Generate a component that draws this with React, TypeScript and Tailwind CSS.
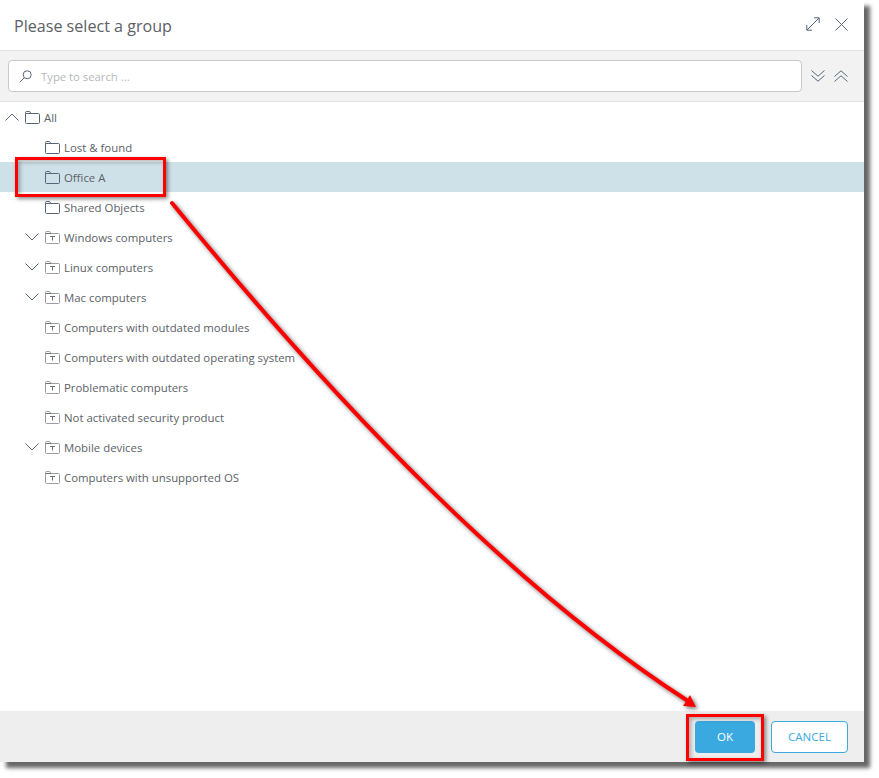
type Node = { label: string; kind: 'folder' | 'dynamic'; depth: number; arrow?: 'up' | 'down'; selected?: boolean };

const NODES: Node[] = [
  { label: 'All', kind: 'folder', depth: 0, arrow: 'up' },
  { label: 'Lost & found', kind: 'folder', depth: 1 },
  { label: 'Office A', kind: 'folder', depth: 1, selected: true },
  { label: 'Shared Objects', kind: 'folder', depth: 1 },
  { label: 'Windows computers', kind: 'dynamic', depth: 1, arrow: 'down' },
  { label: 'Linux computers', kind: 'dynamic', depth: 1, arrow: 'down' },
  { label: 'Mac computers', kind: 'dynamic', depth: 1, arrow: 'down' },
  { label: 'Computers with outdated modules', kind: 'dynamic', depth: 1 },
  { label: 'Computers with outdated operating system', kind: 'dynamic', depth: 1 },
  { label: 'Problematic computers', kind: 'dynamic', depth: 1 },
  { label: 'Not activated security product', kind: 'dynamic', depth: 1 },
  { label: 'Mobile devices', kind: 'dynamic', depth: 1, arrow: 'down' },
  { label: 'Computers with unsupported OS', kind: 'dynamic', depth: 1 },
];

const ICON = '#56667a';

const FolderIcon = () => (
  <svg width="15" height="13" viewBox="0 0 15 13" fill="none" stroke={ICON} strokeWidth="1">
    <path d="M.5 2.5V1.5a1 1 0 0 1 1-1h3l1.5 2h7.5a1 1 0 0 1 1 1v8a1 1 0 0 1-1 1h-12a1 1 0 0 1-1-1z" />
    <path d="M.5 2.5H6" />
  </svg>
);

const DynamicFolderIcon = () => (
  <svg width="15" height="13" viewBox="0 0 15 13" fill="none" stroke="#9a9ea3" strokeWidth="1">
    <path d="M.5 2.5V1.5a1 1 0 0 1 1-1h3l1.5 2h7.5a1 1 0 0 1 1 1v8a1 1 0 0 1-1 1h-12a1 1 0 0 1-1-1z" />
    <path d="M.5 2.5H6M5 5.5h5M7.5 5.5v4" stroke="#6b7178" />
  </svg>
);

const Chevron = ({ up }: { up?: boolean }) => (
  <svg width="14" height="8" viewBox="0 0 14 8" fill="none" stroke={ICON} strokeWidth="1">
    <path d={up ? 'M.5 7.5 7 1l6.5 6.5' : 'M.5 .5 7 7l6.5-6.5'} />
  </svg>
);

const DoubleChevron = ({ up }: { up?: boolean }) => (
  <svg width="14" height="12" viewBox="0 0 14 12" fill="none" stroke={ICON} strokeWidth="1">
    <path d={up ? 'M.5 6.5 7 .8l6.5 5.7M.5 11.5 7 5.8l6.5 5.7' : 'M.5 .5 7 6.2 13.5 .5M.5 5.5 7 11.2l6.5-5.7'} />
  </svg>
);

const TreeRow = ({ node }: { node: Node }) => (
  <div className={`flex h-[30px] items-center ${node.selected ? 'bg-[#cee1e9]' : ''}`}>
    <div className={`flex justify-end pr-[6px] ${node.depth === 0 ? 'w-[25px]' : 'w-[45px]'}`}>
      {node.arrow && <Chevron up={node.arrow === 'up'} />}
    </div>
    {node.kind === 'folder' ? <FolderIcon /> : <DynamicFolderIcon />}
    <span className="ml-[4px] translate-y-px text-[11.4px] text-[#5c6167]">{node.label}</span>
  </div>
);

export default function App() {
  return (
    <div className="relative h-[778px] w-[879px] overflow-hidden bg-white font-['Open_Sans','Noto_Sans',sans-serif]">
      <div className="flex h-[762px] w-[864px] flex-col bg-white shadow-[6px_6px_4px_rgba(0,0,0,0.6)]">
        <header className="flex h-[51px] shrink-0 items-center justify-between border-b border-[#e2e2e2] pl-[14px] pr-[16px]">
          <h1 className="translate-y-px text-[16.1px] text-[#5c6167]">Please select a group</h1>
          <div className="flex -translate-y-px items-center gap-[15px]">
            <svg width="14" height="14" viewBox="0 0 14 14" fill="none" stroke={ICON} strokeWidth="1">
              <path d="M1 13 13 1M8 .8h5.2V6M.8 8v5.2H6" />
            </svg>
            <svg width="13" height="13" viewBox="0 0 13 13" fill="none" stroke={ICON} strokeWidth="1">
              <path d="M.5 .5l12 12M12.5 .5l-12 12" />
            </svg>
          </div>
        </header>

        <div className="flex h-[51px] shrink-0 items-center border-b border-[#e2e2e2] bg-[#f2f2f2] pl-[8px] pr-[16px]">
          <div className="flex h-[32px] w-[794px] items-center rounded-[4px] border border-[#c8c8c8] bg-white pl-[10px]">
            <svg width="13" height="13" viewBox="0 0 13 13" fill="none" stroke={ICON} strokeWidth="1">
              <circle cx="8.2" cy="4.8" r="4" />
              <path d="M5.3 7.7.7 12.3" />
            </svg>
            <span className="ml-[9px] translate-y-px text-[11.3px] text-[#b4b8bc]">Type to search ...</span>
          </div>
          <div className="ml-auto flex items-center gap-[9px]">
            <DoubleChevron />
            <DoubleChevron up />
          </div>
        </div>

        <div className="min-h-0 flex-1 bg-white">
          {NODES.map(node => <TreeRow key={node.label} node={node} />)}
        </div>

        <footer className="flex h-[51px] shrink-0 items-center justify-end gap-[16px] bg-[#eeeeee] pr-[16px]">
          <button className="h-[32px] w-[60px] rounded-[4px] bg-[#3aa9e0] text-[11.5px] text-white">OK</button>
          <button className="h-[32px] w-[77px] rounded-[4px] border border-[#3aa9e0] bg-white text-[11.5px] text-[#3aa9e0]">CANCEL</button>
        </footer>
      </div>

      {/* annotations on top of the dialog */}
      <div className="absolute left-[15px] top-[157px] h-[40px] w-[151px] border-[3px] border-[#ff0000] shadow-[2px_2px_4px_rgba(0,0,0,0.45),inset_2px_2px_4px_rgba(0,0,0,0.3)]" />
      <div className="absolute left-[686px] top-[714px] h-[47px] w-[78px] border-[3px] border-[#ff0000] shadow-[2px_2px_4px_rgba(0,0,0,0.45),inset_2px_2px_4px_rgba(0,0,0,0.3)]" />
      <svg className="absolute left-0 top-0 drop-shadow-[2px_2px_2px_rgba(0,0,0,0.55)]" width="879" height="778" viewBox="0 0 879 778" fill="none">
        <path d="M172 203 C 342 411, 515 589.5, 688 701" stroke="#ff0000" strokeWidth="4" strokeLinecap="round" />
        <path d="M696 707 L683 706 L690 695 Z" fill="#ff0000" />
      </svg>
    </div>
  );
}
